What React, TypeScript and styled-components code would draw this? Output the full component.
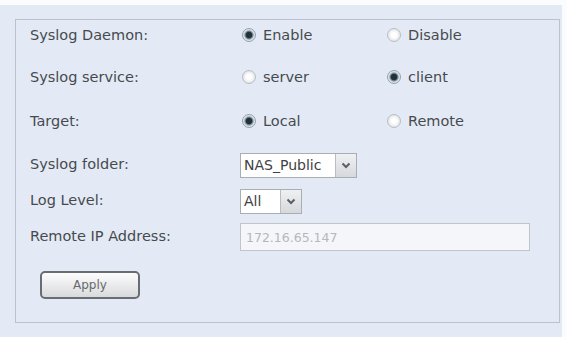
import styled, { createGlobalStyle } from "styled-components";

const GlobalStyle = createGlobalStyle`
  body {
    margin: 0;
    background: #fbfcfd;
    font-family: "DejaVu Sans", Verdana, sans-serif;
  }
`;

const Panel = styled.div`
  margin-top: 5px;
  width: 562px;
  height: 332px;
  box-sizing: border-box;
  background: #e4eaf5;
  padding: 14px 2px 0 15px;
`;

const Fieldset = styled.div`
  border: 1px solid #b9c2cd;
  height: 304px;
  box-sizing: border-box;
  padding: 0 0 0 14px;
  display: flex;
  flex-direction: column;
`;

const Row = styled.div<{ $mt: number }>`
  display: grid;
  grid-template-columns: 210px 145px 1fr;
  align-items: center;
  height: 30px;
  margin-top: ${(p) => p.$mt}px;
`;

const Label = styled.span`
  font-size: 14.5px;
  color: #464a4f;
  margin-top: -2px;
`;

const RadioLabel = styled.label`
  display: flex;
  align-items: center;
  gap: 7px;
  font-size: 14.5px;
  color: #464a4f;
  padding-left: 2px;
  margin-top: -2px;
`;

const RadioDot = styled.span<{ $on?: boolean }>`
  width: 14px;
  height: 14px;
  box-sizing: border-box;
  border-radius: 50%;
  border: 1px solid ${(p) => (p.$on ? "#96a1a9" : "#b9bec3")};
  background: ${(p) =>
    p.$on
      ? "radial-gradient(circle, #24303a 0 2.8px, #667c89 3.6px, #dce4e9 5.2px)"
      : "radial-gradient(circle, #ffffff 0 2.5px, #e3e6e9 6px)"};
`;

const SelectBox = styled.div<{ $w: number }>`
  display: flex;
  width: ${(p) => p.$w}px;
  height: 25px;
  box-sizing: border-box;
  border: 1px solid #a9aeb3;
  background: #fff;
`;

const SelectValue = styled.span`
  flex: 1;
  display: flex;
  align-items: center;
  padding-left: 3px;
  font-size: 14px;
  color: #3e4145;
  border-right: 1px solid #b9bdc1;
`;

const SelectArrow = styled.span`
  width: 20px;
  display: flex;
  align-items: center;
  justify-content: center;
  background: linear-gradient(#eff0f2, #d6d9dc);
`;

const TextInput = styled.div`
  width: 290px;
  height: 28px;
  box-sizing: border-box;
  border: 1px solid #c0c5ca;
  background: #f4f6f9;
  display: flex;
  align-items: center;
  padding-left: 5px;
  font-size: 12.5px;
  color: #b4b8bc;
`;

const Field = styled.div`
  grid-column: 2 / 4;
`;

const ApplyButton = styled.button`
  margin: 19px 0 0 10px;
  width: 100px;
  height: 28px;
  border: 2px solid #686d72;
  border-radius: 5px;
  background: linear-gradient(#fcfcfc, #d9dadd);
  font-family: "DejaVu Sans", Verdana, sans-serif;
  font-size: 12px;
  color: #66696d;
`;

function Chevron() {
  return (
    <svg width="10" height="7" viewBox="0 0 10 7">
      <path d="M1.5 1.5 L5 5 L8.5 1.5" fill="none" stroke="#5b6066" strokeWidth="2" />
    </svg>
  );
}

function Radio({ on, children }: { on?: boolean; children: string }) {
  return (
    <RadioLabel>
      <RadioDot $on={on} />
      {children}
    </RadioLabel>
  );
}

function Select({ value, width }: { value: string; width: number }) {
  return (
    <SelectBox $w={width}>
      <SelectValue>{value}</SelectValue>
      <SelectArrow>
        <Chevron />
      </SelectArrow>
    </SelectBox>
  );
}

export default function App() {
  return (
    <>
      <GlobalStyle />
      <Panel>
        <Fieldset>
          <Row $mt={1}>
            <Label>Syslog Daemon:</Label>
            <Radio on>Enable</Radio>
            <Radio>Disable</Radio>
          </Row>
          <Row $mt={12}>
            <Label>Syslog service:</Label>
            <Radio>server</Radio>
            <Radio on>client</Radio>
          </Row>
          <Row $mt={14}>
            <Label>Target:</Label>
            <Radio on>Local</Radio>
            <Radio>Remote</Radio>
          </Row>
          <Row $mt={13}>
            <Label>Syslog folder:</Label>
            <Field>
              <Select value="NAS_Public" width={117} />
            </Field>
          </Row>
          <Row $mt={6}>
            <Label>Log Level:</Label>
            <Field>
              <Select value="All" width={62} />
            </Field>
          </Row>
          <Row $mt={6}>
            <Label>Remote IP Address:</Label>
            <Field>
              <TextInput>172.16.65.147</TextInput>
            </Field>
          </Row>
          <div>
            <ApplyButton>Apply</ApplyButton>
          </div>
        </Fieldset>
      </Panel>
    </>
  );
}
